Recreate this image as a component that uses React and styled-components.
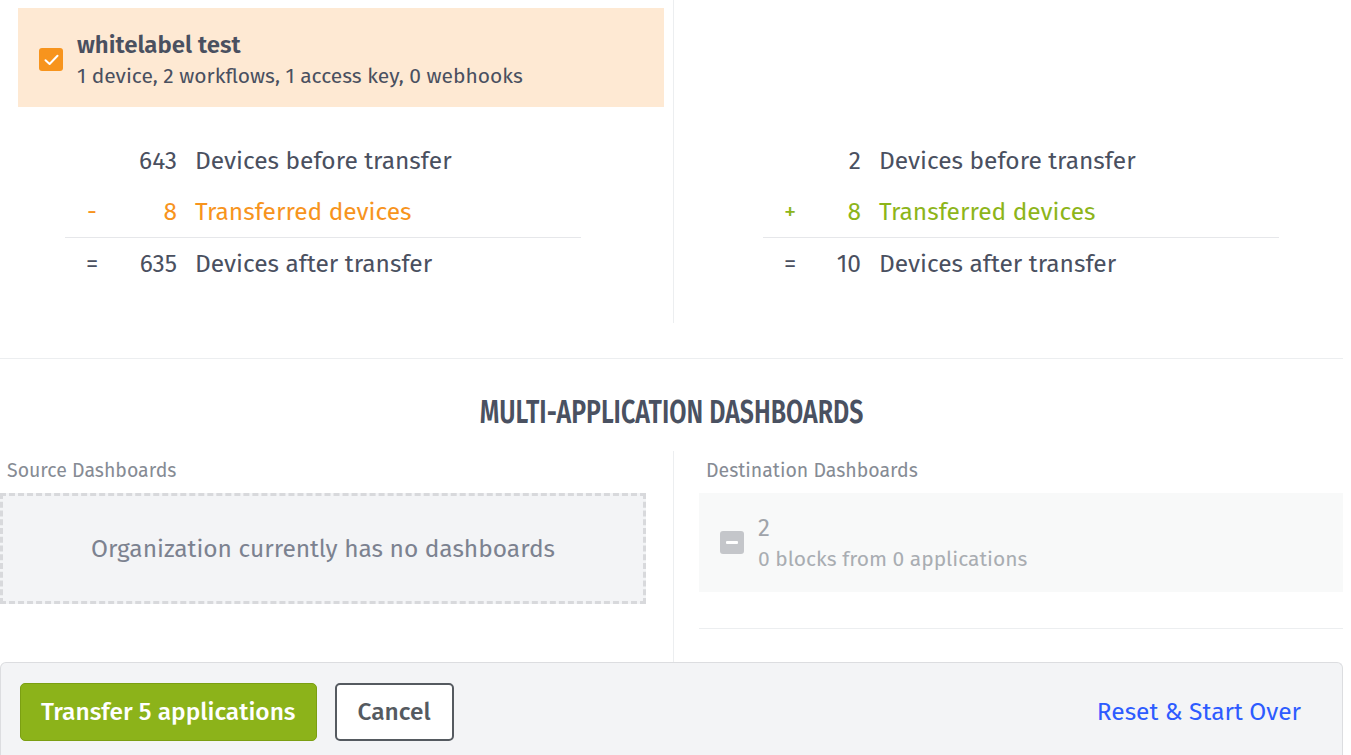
import styled, { createGlobalStyle } from 'styled-components';

const GlobalStyle = createGlobalStyle`
body {
    margin: 0;
    background: #ffffff;
    font-family: "Fira Sans", "Open Sans", "Noto Sans", sans-serif;
    color: #4a5060;
}
`

const Page = styled.div`
width: 1343px;
`

const TopSection = styled.section`
border-bottom: 1px solid #eceef0;
display: grid;
grid-template-columns: 673px 1fr;
padding-bottom: 35px;
`

const Column = styled.div`
border-left: ${props => props.divided ? '1px solid #eceef0' : 'none'};
display: flex;
flex-direction: column;
padding-top: ${props => props.top || '0'};
`

const AppCard = styled.div`
align-items: center;
background-color: #fee9d3;
box-sizing: border-box;
display: flex;
gap: 14px;
height: 99px;
margin: 8px 9px 0 18px;
padding: 4px 0 0 21px;
`

const CheckBox = styled.div`
align-items: center;
background-color: ${props => props.muted ? '#c4c6ca' : '#f7941d'};
border-radius: 3px;
display: flex;
flex-shrink: 0;
height: 23px;
justify-content: center;
width: 24px;
`

const CardText = styled.div`
display: flex;
flex-direction: column;
gap: 4px;
`

const CardTitle = styled.div`
color: ${props => props.muted ? '#a0a4aa' : '#4a5060'};
font-size: 24px;
font-weight: ${props => props.muted ? 400 : 600};
line-height: 28px;
`

const CardSub = styled.div`
color: ${props => props.muted ? '#a9adb2' : '#4a5060'};
font-size: 21px;
line-height: 26px;
`

const Stats = styled.div`
display: flex;
flex-direction: column;
margin: ${props => props.offset};
width: 516px;
`

const StatRow = styled.div`
border-top: ${props => props.ruled ? '1px solid #e6e7ea' : 'none'};
color: ${props => props.tone === 'minus' ? '#f7941d' : props.tone === 'plus' ? '#8db51a' : '#4a5060'};
column-gap: 18px;
display: grid;
font-size: 24.5px;
grid-template-columns: 54px ${props => props.numWidth} 1fr;
line-height: 51px;
`

const Sign = styled.span`
text-align: center;
`

const Num = styled.span`
text-align: right;
`

const Heading = styled.h2`
color: #4a5161;
font-size: 32px;
font-weight: 600;
line-height: 36px;
margin: 35px 0 0;
text-align: center;
transform: scaleX(0.78);
`

const BottomSection = styled.section`
display: grid;
grid-template-columns: 673px 1fr;
margin-top: 21px;
`

const DashColumn = styled.div`
border-left: ${props => props.divided ? '1px solid #eceef0' : 'none'};
box-sizing: border-box;
display: flex;
flex-direction: column;
height: 211px;
padding: ${props => props.divided ? '8px 0 0 25px' : '8px 27px 0 0'};
`

const DashLabel = styled.div`
color: #868b94;
font-size: 19.5px;
line-height: 24px;
margin: 0 0 10px ${props => props.indent || '0'};
`

const EmptyBox = styled.div`
align-items: center;
background-color: #f3f4f6;
border: 3px dashed #d8d9dc;
box-sizing: border-box;
color: #7c8290;
display: flex;
font-size: 24.5px;
height: 111px;
justify-content: center;
`

const DestList = styled.div`
border-bottom: 1px solid #eceef0;
padding-bottom: 36px;
`

const DestBox = styled.div`
align-items: center;
background-color: #f8f9f9;
display: flex;
gap: 14px;
height: 99px;
padding-left: 21px;
`

const Footer = styled.footer`
align-items: center;
background-color: #f3f4f6;
border: 1px solid #dcdde0;
border-bottom: none;
border-radius: 6px 6px 0 0;
box-sizing: border-box;
display: flex;
height: 93px;
padding: 5px 41px 0 19px;
`

const Button = styled.button`
background-color: ${props => props.primary ? '#8cb31a' : '#ffffff'};
border: ${props => props.primary ? '1px solid #7b9f12' : '2px solid #555a60'};
border-radius: 5px;
box-sizing: border-box;
color: ${props => props.primary ? '#ffffff' : '#555a60'};
cursor: pointer;
font-family: inherit;
font-size: 24.5px;
font-weight: 500;
height: 58px;
margin-right: 18px;
padding: 0 ${props => props.primary ? '20px' : '21px'};
`

const ResetLink = styled.a`
color: #2d5bff;
cursor: pointer;
font-size: 24.5px;
margin-left: auto;
`

const CheckIcon = () => (
    <svg width="15" height="12" viewBox="0 0 15 12" fill="none">
        <path d="M1.5 6.2 L5.6 10 L13.5 1.8" stroke="#fff" strokeWidth="2" strokeLinecap="round" strokeLinejoin="round" />
    </svg>
)

const MinusIcon = () => (
    <svg width="12" height="3" viewBox="0 0 12 3">
        <rect width="12" height="3" rx="1" fill="#fff" />
    </svg>
)

const StatBlock = ({ offset, numWidth, sign, tone, before, moved, after }) => (
    <Stats offset={offset}>
        <StatRow numWidth={numWidth}>
            <Sign />
            <Num>{before}</Num>
            <span>Devices before transfer</span>
        </StatRow>
        <StatRow numWidth={numWidth} tone={tone}>
            <Sign>{sign}</Sign>
            <Num>{moved}</Num>
            <span>Transferred devices</span>
        </StatRow>
        <StatRow numWidth={numWidth} ruled>
            <Sign>=</Sign>
            <Num>{after}</Num>
            <span>Devices after transfer</span>
        </StatRow>
    </Stats>
)

const App = () => {
    return (
        <Page>
            <GlobalStyle />
            <TopSection>
                <Column>
                    <AppCard>
                        <CheckBox><CheckIcon /></CheckBox>
                        <CardText>
                            <CardTitle>whitelabel test</CardTitle>
                            <CardSub>1 device, 2 workflows, 1 access key, 0 webhooks</CardSub>
                        </CardText>
                    </AppCard>
                    <StatBlock offset="28px 0 34px 65px" numWidth="40px" sign="-" tone="minus" before="643" moved="8" after="635" />
                </Column>
                <Column divided top="135px">
                    <StatBlock offset="0 0 34px 89px" numWidth="26px" sign="+" tone="plus" before="2" moved="8" after="10" />
                </Column>
            </TopSection>

            <Heading>MULTI-APPLICATION DASHBOARDS</Heading>

            <BottomSection>
                <DashColumn>
                    <DashLabel indent="7px">Source Dashboards</DashLabel>
                    <EmptyBox>Organization currently has no dashboards</EmptyBox>
                </DashColumn>
                <DashColumn divided>
                    <DashLabel indent="7px">Destination Dashboards</DashLabel>
                    <DestList>
                        <DestBox>
                            <CheckBox muted><MinusIcon /></CheckBox>
                            <CardText>
                                <CardTitle muted>2</CardTitle>
                                <CardSub muted>0 blocks from 0 applications</CardSub>
                            </CardText>
                        </DestBox>
                    </DestList>
                </DashColumn>
            </BottomSection>

            <Footer>
                <Button primary>Transfer 5 applications</Button>
                <Button>Cancel</Button>
                <ResetLink>Reset &amp; Start Over</ResetLink>
            </Footer>
        </Page>
    )
}

export default App
